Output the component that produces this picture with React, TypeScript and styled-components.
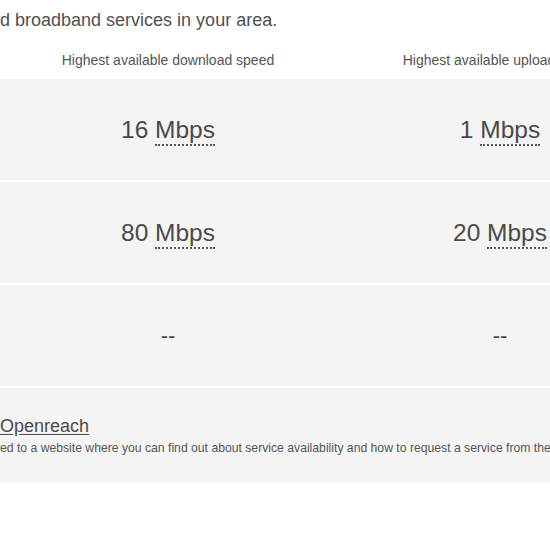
import React from 'react';
import styled, { createGlobalStyle } from 'styled-components';

const GlobalStyle = createGlobalStyle`
  html, body {
    margin: 0;
    padding: 0;
    background: #ffffff;
    overflow: hidden;
  }
  body {
    font-family: "Liberation Sans", Arial, sans-serif;
    color: #4d4d4d;
  }
`;

const Page = styled.div`
  width: 550px;
  overflow: hidden;
`;

const Intro = styled.p`
  margin: 0;
  padding-top: 9px;
  font-size: 18px;
  line-height: 22px;
  color: #505050;
  white-space: nowrap;
`;

const Table = styled.div`
  display: flex;
  flex-direction: column;
  gap: 2px;
`;

const Row = styled.div<{ $head?: boolean; $tall?: number }>`
  display: grid;
  grid-template-columns: 332px 332px;
  padding-left: 2px;
  width: 666px;
  align-items: center;
  background: ${(p) => (p.$head ? 'transparent' : '#f4f4f4')};
  height: ${(p) => (p.$tall ? `${p.$tall}px` : 'auto')};
`;

const HeadCell = styled.div`
  padding: 19px 0 9px;
  text-align: center;
  font-size: 14px;
  line-height: 20px;
  color: #555555;
  white-space: nowrap;
`;

const Value = styled.div`
  text-align: center;
  font-size: 24.5px;
  line-height: 28px;
  color: #4a4a4a;
  white-space: nowrap;
`;

const Unit = styled.abbr`
  text-decoration: none;
  border-bottom: 2px dotted #555555;
  padding-bottom: 1px;
`;

const Dash = styled(Value)`
  font-size: 22px;
`;

const InfoRow = styled.div`
  background: #f4f4f4;
  height: 94px;
  display: flex;
  flex-direction: column;
  justify-content: center;
  white-space: nowrap;
  overflow: hidden;
`;

const ProviderLink = styled.a`
  display: block;
  font-size: 18px;
  line-height: 24px;
  color: #4a4a4a;
  text-decoration: underline;
  text-underline-offset: 2px;
`;

const InfoText = styled.p`
  margin: 2px 0 0;
  font-size: 12.2px;
  line-height: 16px;
  color: #555555;
`;

const speeds = [
  { down: '16', up: '1' },
  { down: '80', up: '20' },
  { down: null, up: null },
];

const Speed: React.FC<{ value: string | null }> = ({ value }) =>
  value ? (
    <Value>
      {value} <Unit title="Megabits per second">Mbps</Unit>
    </Value>
  ) : (
    <Dash>--</Dash>
  );

const App: React.FC = () => (
  <Page>
    <GlobalStyle />
    <Intro>d broadband services in your area.</Intro>
    <Row $head>
      <HeadCell>Highest available download speed</HeadCell>
      <HeadCell>Highest available upload speed</HeadCell>
    </Row>
    <Table>
      {speeds.map((s, i) => (
        <Row key={i} $tall={101}>
          <Speed value={s.down} />
          <Speed value={s.up} />
        </Row>
      ))}
      <InfoRow>
        <ProviderLink href="#">Openreach</ProviderLink>
        <InfoText>
          ed to a website where you can find out about service availability and how to request a service from them.
        </InfoText>
      </InfoRow>
    </Table>
  </Page>
);

export default App;
